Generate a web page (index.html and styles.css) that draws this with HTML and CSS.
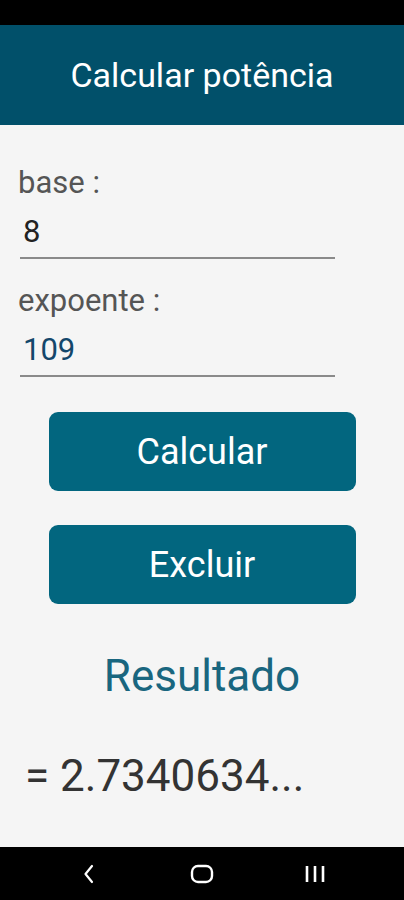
FILE: index.html
```html
<!DOCTYPE html>
<html lang="pt">
<head>
    <meta charset="UTF-8">
    <meta name="viewport" content="width=device-width, initial-scale=1.0">
    <title>Calcular potência</title>
    <link rel="stylesheet" href="styles.css">
</head>
<body>

<div class="phone">
    <div class="status-bar"></div>

    <header class="app-bar">
        <h1>Calcular potência</h1>
    </header>

    <main class="content">
        <!-- campos -->
        <label for="base">base :</label>
        <input type="text" id="base" class="field" value="8">

        <label for="expoente" class="label-next">expoente :</label>
        <input type="text" id="expoente" class="field field-active" value="109">

        <div class="actions">
            <button type="button">Calcular</button>
            <button type="button">Excluir</button>
        </div>

        <h2 class="result-title">Resultado</h2>
        <div class="result">= 2.7340634...</div>
    </main>

    <nav class="nav-bar">
        <span class="nav-item"><svg width="14" height="20" viewBox="0 0 14 20"><path d="M10 2 L3.5 10 L10 18" fill="none" stroke="#fff" stroke-width="2.2" stroke-linecap="round" stroke-linejoin="round"/></svg></span>
        <span class="nav-item"><svg width="24" height="20" viewBox="0 0 24 20"><rect x="2" y="2" width="20" height="16" rx="6" fill="none" stroke="#fff" stroke-width="2.4"/></svg></span>
        <span class="nav-item"><svg width="22" height="20" viewBox="0 0 22 20"><path d="M3 2 V18 M11 2 V18 M19 2 V18" stroke="#fff" stroke-width="2.6"/></svg></span>
    </nav>
</div>

</body>
</html>
```

FILE: styles.css
```css
body {
    margin: 0;
    font-family: Roboto, "Noto Sans", Arial, sans-serif;
    background-color: #f5f5f5;
}
.phone {
    width: 404px;
    height: 900px;
    display: flex;
    flex-direction: column;
}
.status-bar {
    height: 25px;
    background-color: #000;
}
.app-bar {
    height: 100px;
    background-color: #01506a;
    display: flex;
    align-items: center;
    justify-content: center;
}
.app-bar h1 {
    margin: 0;
    color: #fff;
    font-size: 34px;
    font-weight: normal;
    line-height: 40px;
}
.content {
    flex: 1;
    padding-top: 40px;
}
label {
    display: block;
    margin-left: 18px;
    font-size: 31px;
    color: #555;
    line-height: 36px;
}
.label-next {
    margin-top: 24px;
}
.field {
    display: block;
    margin: 12px 0 0 20px;
    width: 315px;
    height: 46px;
    box-sizing: border-box;
    padding: 0 0 8px 3px;
    border: 0;
    border-bottom: 2px solid #8a8a8a;
    background: transparent;
    font-family: inherit;
    font-size: 31px;
    line-height: 36px;
    color: #222;
    outline: none;
}
.field-active {
    color: #13476b;
}
.actions {
    display: flex;
    flex-direction: column;
    align-items: center;
    gap: 34px;
    margin-top: 35px;
}
.actions button {
    width: 307px;
    height: 79px;
    border: 0;
    border-radius: 9px;
    background-color: #02667f;
    color: #fff;
    font-family: inherit;
    font-size: 36px;
}
.result-title {
    margin: 47px 0 0 0;
    text-align: center;
    font-size: 44px;
    line-height: 50px;
    font-weight: normal;
    color: #19667f;
}
.result {
    margin: 50px 0 0 25px;
    font-size: 44px;
    line-height: 50px;
    color: #333;
}
.nav-bar {
    height: 53px;
    background-color: #000;
    display: flex;
    align-items: center;
    justify-content: center;
}
.nav-item {
    width: 113px;
    display: flex;
    justify-content: center;
}
```
